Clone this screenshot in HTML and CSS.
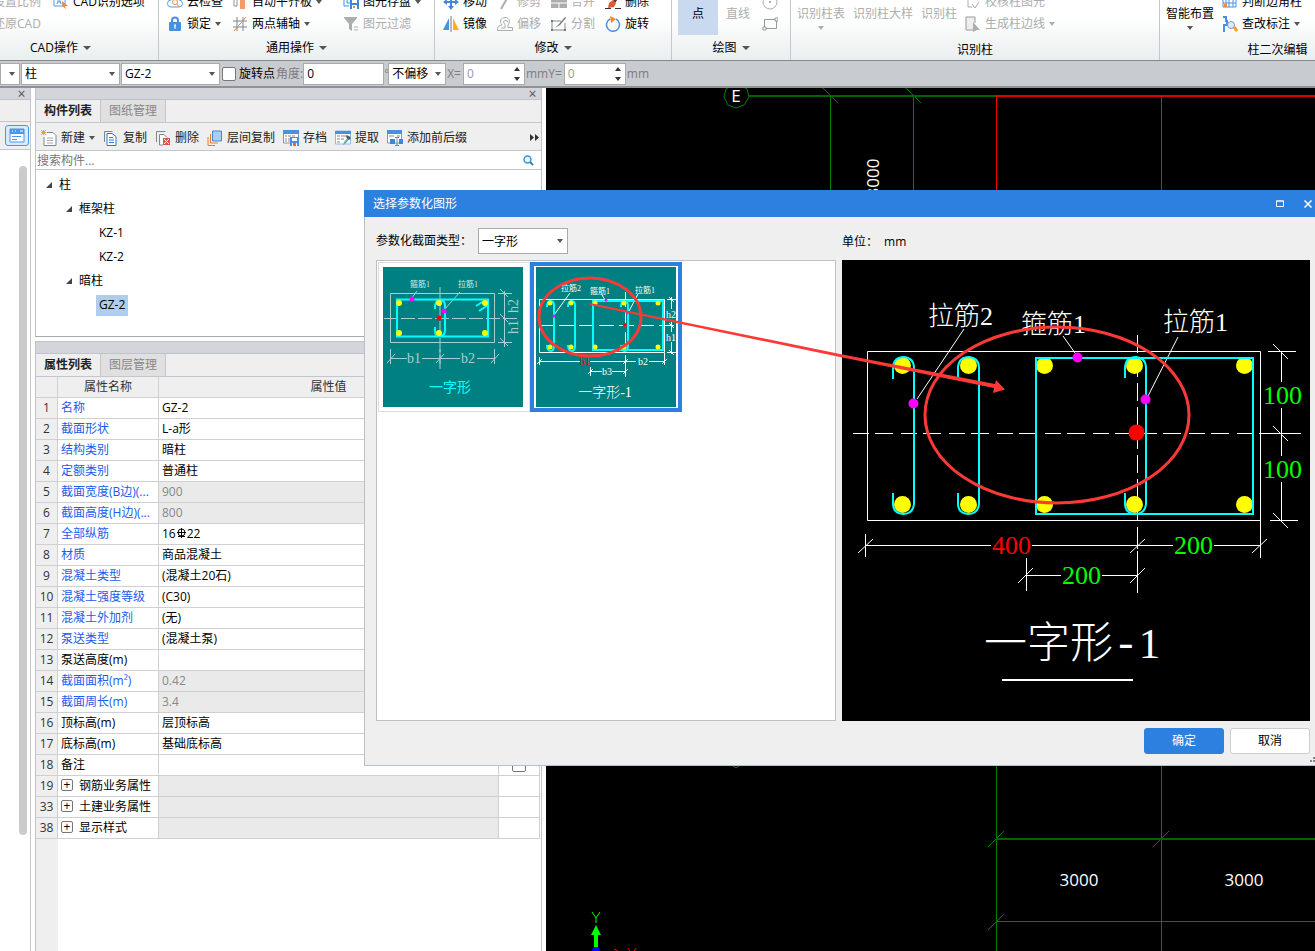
FILE: index.html
```html
<!DOCTYPE html>
<html lang="zh-CN">
<head>
    <meta charset="UTF-8">
    <meta name="viewport" content="width=device-width, initial-scale=1.0">
    <title>选择参数化图形</title>
    <link rel="stylesheet" href="styles.css">
</head>
<body>

<header class="ribbon">
    <section class="group group-cad">
        <div class="rows cols-cad">
            <button class="tool off">设置比例</button>
            <button class="tool"><svg class="icon" viewBox="0 0 16 16"><path d="M1 2v10h11V2M4 10l2-6 2 6M5 8h3" fill="none" stroke="#5b9be0"/><path d="M9 7l6 5-3 0 1 3-4-3z" fill="#f08a4b"/></svg>CAD识别选项</button>
            <button class="tool off">还原CAD</button>
        </div>
        <h2 class="group-title">CAD操作<i class="arrow big"></i></h2>
    </section>
    <section class="group group-common">
        <div class="rows cols-common">
            <button class="tool"><svg class="icon" viewBox="0 0 16 16"><path d="M4 13a3.500 3.500 0 0 1 0-7 4.500 4.500 0 0 1 8 0 3.500 3.500 0 0 1 0 7z" fill="#fff" stroke="#5b9be0"/><circle cx="8" cy="8" r="2.500" fill="none" stroke="#f08a4b"/><path d="M10 10l2 3" stroke="#f08a4b"/></svg>云检查</button>
            <button class="tool"><svg class="icon" viewBox="0 0 16 16"><path d="M2 4h3v8H2z" fill="#fff" stroke="#8b96a3"/><path d="M8 2h5v13H8z" fill="#f59a6c"/></svg>自动平齐板<i class="arrow"></i></button>
            <button class="tool"><svg class="icon" viewBox="0 0 16 16"><path d="M1 1v11h5M4 1v8h3" fill="none" stroke="#4a90d9"/><path d="M7 5h9v10H7z" fill="#3f86d6"/><path d="M9 6h5v3H9z" fill="#fff"/><path d="M9 11h5v4H9z" fill="#fff"/><path d="M10 12h2v2h-2z" fill="#f08a4b"/></svg>图元存盘<i class="arrow"></i></button>
            <button class="tool"><svg class="icon" viewBox="0 0 16 16"><path d="M5 7V4.500a3 3 0 0 1 6 0V7" fill="none" stroke="#4a90e2" stroke-width="2"/><rect x="2" y="6" width="12" height="9" rx="1" fill="#4a90e2"/><path d="M8 8v5M7 10h2" stroke="#fff"/></svg>锁定<i class="arrow"></i></button>
            <button class="tool"><svg class="icon" viewBox="0 0 16 16"><path d="M1 5h14M1 11h14M5 1v14M11 1v14" stroke="#7c8794" fill="none"/><path d="M2 15L14 1" stroke="#f08a4b"/></svg>两点辅轴<i class="arrow"></i></button>
            <button class="tool off"><svg class="icon" viewBox="0 0 16 16"><path d="M1 1h13v1L9 8v7l-3-2V8L1 2z" fill="#adadad"/><path d="M11 11h4M11 14h4" stroke="#adadad"/></svg>图元过滤</button>
        </div>
        <h2 class="group-title">通用操作<i class="arrow big"></i></h2>
    </section>
    <section class="group group-edit">
        <div class="rows cols-edit">
            <button class="tool"><svg class="icon" viewBox="0 0 16 16"><path d="M8 0l3 4H9v3h3V5l4 3-4 3V9H9v3h2l-3 4-3-4h2V9H4v2L0 8l4-3v2h3V4H5z" fill="#4a86d2"/></svg>移动</button>
            <button class="tool off"><svg class="icon" viewBox="0 0 16 16"><path d="M12 1L4 15" stroke="#adadad" stroke-width="2"/></svg>修剪</button>
            <button class="tool off"><svg class="icon" viewBox="0 0 16 16"><path d="M0 5h16v9H0z" fill="#adadad"/><path d="M0 9h16M8 9v5" stroke="#fff"/></svg>合并</button>
            <button class="tool"><svg class="icon" viewBox="0 0 16 16"><path d="M14 1L9 8" stroke="#444" stroke-width="3"/><path d="M4 9l4-3 3 3-2 4-6 1z" fill="#e05a2b"/><path d="M0 14.500h6M10 14.500h6" stroke="#333"/></svg>删除</button>
            <button class="tool"><svg class="icon" viewBox="0 0 16 16"><path d="M6 2v12H0z" fill="#4a90e2"/><path d="M10 2v12h6z" fill="#fbb117"/><path d="M8 0v16" stroke="#777"/></svg>镜像</button>
            <button class="tool off"><svg class="icon" viewBox="0 0 16 16"><path d="M.5 14.500h15v-3H11V9c3-4 1-7.500-3-7.500S2 5 5 9l-2 .5c-2 .5-2.500 2-2.500 5zM4 12h4V8.500Q5 5 8 4.500t3 2" fill="none" stroke="#adadad"/></svg>偏移</button>
            <button class="tool off"><svg class="icon" viewBox="0 0 16 16"><path d="M1 5h9M1 5v9h13V7" fill="none" stroke="#888"/><path d="M4 12l4-4 6-7 1 1-6 7z" fill="#777"/><path d="M0 4h2v2H0zM0 13h2v2H0zM13 13h2v2h-2z" fill="#777"/></svg>分割</button>
            <button class="tool"><svg class="icon" viewBox="0 0 16 16"><path d="M11 3a6.500 6.500 0 1 1-6 0" fill="none" stroke="#4a90e2" stroke-width="1.500"/><path d="M5 0l6 3-5 4z" fill="#f08a24"/></svg>旋转</button>
        </div>
        <h2 class="group-title">修改<i class="arrow big"></i></h2>
    </section>
    <section class="group group-draw">
        <div class="big-row">
            <button class="big-tool on">点</button>
            <button class="big-tool off">直线</button>
            <div class="stack">
                <button class="tool off" aria-label="圆"><svg class="icon" viewBox="0 0 16 16"><circle cx="8" cy="8" r="7" fill="none" stroke="#adadad"/><path d="M7 7h2v2H7z" fill="#adadad"/></svg></button>
                <button class="tool off" aria-label="矩形"><svg class="icon" viewBox="0 0 16 16"><path d="M2.500 3.500h12v9h-12z" fill="none" stroke="#999"/><path d="M13 2h3v3h-3zM1 11h3v3H1z" fill="#fff" stroke="#999"/></svg></button>
            </div>
        </div>
        <h2 class="group-title">绘图<i class="arrow big"></i></h2>
    </section>
    <section class="group group-recognize">
        <div class="big-row">
            <button class="big-tool off">识别柱表<i class="arrow"></i></button>
            <button class="big-tool off">识别柱大样</button>
            <button class="big-tool off">识别柱</button>
            <div class="stack">
                <button class="tool off"><svg class="icon" viewBox="0 0 16 16"><path d="M3 1v12h4M3 2h9v4" fill="none" stroke="#adadad"/><path d="M7 10l3 4 4-6" fill="none" stroke="#adadad"/></svg>校核柱图元</button>
                <button class="tool off"><svg class="icon" viewBox="0 0 16 16"><path d="M9 14H1V1h9v6" fill="#eee" stroke="#999"/><path d="M8 6l7 8-3 0-4 2z" fill="#adadad"/></svg>生成柱边线<i class="arrow"></i></button>
            </div>
        </div>
        <h2 class="group-title low">识别柱</h2>
    </section>
    <section class="group group-second">
        <div class="big-row">
            <button class="big-tool">智能布置<i class="arrow"></i></button>
            <div class="stack">
                <button class="tool"><svg class="icon" viewBox="0 0 16 16"><path d="M1 3v10h13V3M4 3v10M7 3v10M11 3v10M1 9h13" fill="none" stroke="#4a90e2"/><path d="M2 10h3v3H2z" fill="#f08a4b"/></svg>判断边角柱</button>
                <button class="tool"><svg class="icon" viewBox="0 0 16 16"><path d="M1 1h3v4h2M1 15h1V9h3V5" fill="none" stroke="#4a90e2" stroke-width="2"/><circle cx="9" cy="9" r="3.500" fill="#dfeaff" stroke="#7a94d8"/><path d="M12 11l3 4" stroke="#f5a31a" stroke-width="3"/></svg>查改标注<i class="arrow"></i></button>
            </div>
        </div>
        <h2 class="group-title low">柱二次编辑</h2>
    </section>
</header>

<form class="options">
    <select class="w-level" aria-label="楼层"><option></option></select>
    <select class="w-wide" aria-label="构件类型"><option>柱</option></select>
    <select class="w-wide" aria-label="构件"><option>GZ-2</option></select>
    <input type="checkbox" class="check" id="rotate"><label for="rotate" class="dark">旋转点</label>
    <label for="angle">角度:</label><input type="text" class="w-angle" id="angle" value="0"><span class="degree">°</span>
    <select class="w-offset" aria-label="偏移"><option>不偏移</option></select>
    <label for="offx">X=</label><input type="text" class="spin" id="offx" value="0"><span>mm</span>
    <label for="offy">Y=</label><input type="text" class="spin" id="offy" value="0"><span>mm</span>
</form>

<main class="workspace">
    <aside class="nav">
        <div class="dock-head"><button class="close" aria-label="关闭">×</button></div>
        <div class="nav-blank"></div>
        <div class="nav-tools">
            <button class="nav-view" aria-label="视图"><svg width="16" height="16" viewBox="0 0 16 16"><path d="M1 1h14v13H1z" fill="#fff" stroke="#4a98ea"/><path d="M1 1h14v5H1z" fill="#4a98ea"/><path d="M3 3h1M6 3h1M11 3h3" stroke="#fff"/><path d="M3 8.500h9M3 11.500h5" stroke="#4a98ea"/></svg></button>
        </div>
        <div class="nav-list"><div class="scrollbar"></div></div>
    </aside>

    <div class="docks">
        <section class="dock dock-members">
            <div class="dock-head"><button class="close" aria-label="关闭">×</button></div>
            <div class="tabs"><button class="tab active">构件列表</button><button class="tab">图纸管理</button></div>
            <div class="toolbar">
                <button class="tool"><svg class="icon" viewBox="0 0 16 16"><path d="M6 2.500h6l3 3v10H3V7" fill="#fff" stroke="#7c8794"/><path d="M6 8h6M6 10.500h6M6 13h6" stroke="#aaa"/><path d="M0 0l5 5M5 0L0 5M2.500 0v5M0 2.500h5" stroke="#f0a030"/></svg>新建<i class="arrow"></i></button>
                <button class="tool"><svg class="icon" viewBox="0 0 16 16"><path d="M1.500 12V1.500h8" fill="none" stroke="#7c8794"/><path d="M4 3.500h5l4 3v9H4z" fill="#fff" stroke="#2f78d0"/><path d="M6 7.500h4M6 10h5M6 12.500h5" stroke="#2f78d0"/></svg>复制</button>
                <button class="tool"><svg class="icon" viewBox="0 0 16 16"><path d="M1.500 12V1.500h9" fill="none" stroke="#7c8794"/><path d="M8 15H4.500V4.500H9l3 3" fill="#fff" stroke="#7c8794"/><path d="M8 8h7v7H8z" fill="#d9534f"/><path d="M9 9l5 5M14 9l-5 5" stroke="#fff"/></svg>删除</button>
                <button class="tool"><svg class="icon" viewBox="0 0 16 16"><path d="M5.500 1h9v10h-9z" fill="#a9cdf7" stroke="#4a86d2"/><path d="M3.500 4v9H11M1 7v8.500h7" fill="none" stroke="#ee7a2b"/></svg>层间复制</button>
                <button class="tool"><svg class="icon" viewBox="0 0 16 16"><path d="M.5 1h15v12H.5z" fill="#fff" stroke="#8b96a3"/><path d="M0 0h16v4H0z" fill="#4a90e2"/><path d="M2 6h2m1 0h3m1 0h3M2 9h2m1 0h2M2 11h2m1 0h2" stroke="#888"/><path d="M7 7h9v9H7z" fill="#4a90e2"/><path d="M9 8h5v3H9zM9 13h5v3H9z" fill="#fff"/><path d="M10 13h3v3h-3z" fill="#f06a20"/></svg>存档</button>
                <button class="tool"><svg class="icon" viewBox="0 0 16 16"><path d="M.5 1h15v13H.5z" fill="#fff" stroke="#8fb9ea"/><path d="M0 1h16v3H0z" fill="#4a90e2"/><path d="M2 6h3m1 0h6M2 9h3m1 0h3M2 12h3" stroke="#888"/><path d="M8 15l1-3 5-6 2 1-5 6z" fill="#5ab0c0"/><path d="M12 5l4 3-2 2-3-3z" fill="#555"/></svg>提取</button>
                <button class="tool"><svg class="icon" viewBox="0 0 16 16"><path d="M.5 1h14v12H.5z" fill="#fff" stroke="#8b96a3"/><path d="M0 0h15v4H0z" fill="#4a90e2"/><path d="M2 6h5m3 0h3" stroke="#888"/><path d="M3 9h5v5H3zM12 9h4v5h-4z" fill="#3f86d6"/><path d="M8 7.500h4M10 7v8M8 15.500h4" stroke="#4a90e2"/></svg>添加前后缀</button>
                <button class="more" aria-label="更多"><svg width="9" height="7" viewBox="0 0 9 7"><path d="M0 0l4 3.500L0 7zM5 0l4 3.500L5 7z" fill="#333"/></svg></button>
            </div>
            <div class="search">
                <input type="text" aria-label="搜索构件" placeholder="搜索构件...">
                <svg width="11" height="11" viewBox="0 0 11 11"><circle cx="4.500" cy="4.500" r="3.500" fill="#eaf5ff" stroke="#3a9bd0" stroke-width="1.500"/><path d="M7 7l3 3" stroke="#2e86bd" stroke-width="2"/></svg>
            </div>
            <ul class="tree">
                <li><span class="node"><i class="twist"></i>柱</span>
                    <ul>
                        <li><span class="node"><i class="twist"></i>框架柱</span>
                            <ul>
                                <li><span class="node leaf">KZ-1</span></li>
                                <li><span class="node leaf">KZ-2</span></li>
                            </ul>
                        </li>
                        <li><span class="node"><i class="twist"></i>暗柱</span>
                            <ul>
                                <li><span class="node leaf"><b class="picked">GZ-2</b></span></li>
                            </ul>
                        </li>
                    </ul>
                </li>
            </ul>
        </section>

        <section class="dock dock-props">
            <div class="dock-head"></div>
            <div class="tabs"><button class="tab active">属性列表</button><button class="tab">图层管理</button></div>
            <div class="props-body">
            <table class="props">
                <colgroup><col class="c-num"><col class="c-name"><col class="c-value"><col class="c-extra"></colgroup>
                <thead><tr><th></th><th>属性名称</th><th>属性值</th><th></th></tr></thead>
                <tbody>
                <tr><th>1</th><td class="key">名称</td><td>GZ-2</td><td></td></tr>
                <tr><th>2</th><td class="key">截面形状</td><td>L-a形</td><td></td></tr>
                <tr><th>3</th><td class="key">结构类别</td><td>暗柱</td><td></td></tr>
                <tr><th>4</th><td class="key">定额类别</td><td>普通柱</td><td></td></tr>
                <tr><th>5</th><td class="key">截面宽度(B边)(...</td><td class="locked">900</td><td></td></tr>
                <tr><th>6</th><td class="key">截面高度(H边)(...</td><td class="locked">800</td><td></td></tr>
                <tr><th>7</th><td class="key">全部纵筋</td><td>16<svg class="rebar" width="11" height="10" viewBox="0 0 11 10"><circle cx="5.500" cy="4.500" r="3.500" fill="none" stroke="#000"/><path d="M5.500 0v10M1 4.500h9M2 8.500h7" stroke="#000"/></svg>22</td><td></td></tr>
                <tr><th>8</th><td class="key">材质</td><td>商品混凝土</td><td></td></tr>
                <tr><th>9</th><td class="key">混凝土类型</td><td>(混凝土20石)</td><td></td></tr>
                <tr><th>10</th><td class="key">混凝土强度等级</td><td>(C30)</td><td></td></tr>
                <tr><th>11</th><td class="key">混凝土外加剂</td><td>(无)</td><td></td></tr>
                <tr><th>12</th><td class="key">泵送类型</td><td>(混凝土泵)</td><td></td></tr>
                <tr><th>13</th><td>泵送高度(m)</td><td></td><td></td></tr>
                <tr><th>14</th><td class="key">截面面积(m²)</td><td class="locked">0.42</td><td></td></tr>
                <tr><th>15</th><td class="key">截面周长(m)</td><td class="locked">3.4</td><td></td></tr>
                <tr><th>16</th><td>顶标高(m)</td><td>层顶标高</td><td></td></tr>
                <tr><th>17</th><td>底标高(m)</td><td>基础底标高</td><td></td></tr>
                <tr><th>18</th><td>备注</td><td></td><td class="center"><input type="checkbox" class="check" aria-label="备注附加"></td></tr>
                <tr><th>19</th><td><button class="plus" aria-label="展开">+</button>钢筋业务属性</td><td class="locked"></td><td></td></tr>
                <tr><th>33</th><td><button class="plus" aria-label="展开">+</button>土建业务属性</td><td class="locked"></td><td></td></tr>
                <tr><th>38</th><td><button class="plus" aria-label="展开">+</button>显示样式</td><td class="locked"></td><td></td></tr>
                </tbody>
            </table>
            </div>
        </section>
    </div>

    <div class="canvas">
        <svg viewBox="546 88 769 863" preserveAspectRatio="xMinYMin slice">
            <!-- 轴网 -->
            <g fill="none" stroke="#008000">
                <path d="M733 85l-7 4-2 8 4 8 8 3 8-3 5-8-2-8-7-4zM728 762l8 6 8-6"/>
                <path d="M830.500 96v100M913.500 96v100M823 88l15 15M906 88l15 15"/>
                <path d="M996.500 760v191M1161.500 760v191M996 921.500h319"/>
                <path d="M988 847l16-16M1153 847l16-16M988 930l16-16"/>
            </g>
            <path d="M749 96h247M996 839h319" fill="none" stroke="#006400" stroke-width="2"/>
            <path d="M996 96h319" fill="none" stroke="#e00000" stroke-width="2"/>
            <path d="M996.500 96v100M1161.500 96v100" fill="none" stroke="#ff0000"/>
            <g class="axis-text" text-anchor="middle">
                <text x="736" y="102">E</text>
                <text x="1079" y="886">3000</text>
                <text x="1244" y="886">3000</text>
                <text transform="translate(879 178) rotate(-90)">3000</text>
            </g>
            <!-- 坐标轴 -->
            <path d="M592 912l4 6 4-6M596 918v5" fill="none" stroke="#0f0"/>
            <path d="M596 925l5 10h-3v14h-4v-14h-3z" fill="#0f0"/>
            <path d="M592 951a4 4 0 0 1 8 0z" fill="#00f"/>
            <path d="M614 949l4 2M628 948l3 5M636 948l-3 5" stroke="#f00"/>
        </svg>
    </div>
</main>

<div class="dialog" role="dialog" aria-labelledby="dialog-title">
    <div class="dialog-head">
        <h1 id="dialog-title">选择参数化图形</h1>
        <button class="win" aria-label="最大化"><svg width="8" height="7" viewBox="0 0 8 7"><path d="M.5 1h7v5.500h-7zM0 1h8" fill="none" stroke="#fff"/></svg></button>
        <button class="win" aria-label="关闭"><svg width="8" height="8" viewBox="0 0 8 8"><path d="M.5.5l7 7M7.500.5l-7 7" stroke="#fff" stroke-width="1.500"/></svg></button>
    </div>
    <div class="dialog-body">
        <div class="pick">
            <div class="field"><label for="section-type">参数化截面类型：</label><select id="section-type"><option>一字形</option></select></div>
            <div class="gallery">
                <button class="thumb">
                    <svg viewBox="0 0 140 140">
                        <g fill="none" stroke="#a5d0d0">
                            <path d="M7.500 26.500h104v49H7.500z"/>
                            <path d="M57 20v83M1 51.500h135" stroke-dasharray="14 3"/>
                            <path d="M7.500 82v15M57 82v15M111.500 82v15M7 91.500h17M39 91.500h38M94 91.500h18M4 96l8-9M53 96l8-9M108 96l8-9"/>
                            <path d="M121.500 24v56M115 26.500h14M115 75.500h14M117 22l8 8M117 47l8 8M117 71l8 8M34 24l-6 8M77 25L61 43"/>
                        </g>
                        <g fill="none" stroke="#0ff" stroke-width="2">
                            <path d="M14 32.500h91v37H14zM52 42v-3q1-6 5-6 5 0 5 6v24q0 6-5 6-5 0-5-5v-4"/>
                            <path d="M93 39l8-5M96 44l9-6"/>
                        </g>
                        <g fill="#ff0"><circle cx="16" cy="36" r="3"/><circle cx="56" cy="36" r="3"/><circle cx="102" cy="36" r="3"/><circle cx="16" cy="66" r="3"/><circle cx="56" cy="66" r="3"/><circle cx="102" cy="66" r="3"/></g>
                        <g fill="#f0f"><circle cx="29" cy="32" r="2.500"/><circle cx="61" cy="44" r="2.500"/></g>
                        <circle cx="56" cy="51" r="2.500" fill="#f00"/>
                        <g class="cad-text" fill="#d5eaea" text-anchor="middle">
                            <text class="label" x="37" y="20" font-size="8">箍筋1</text><text class="label" x="85" y="20" font-size="8">拉筋1</text>
                            <g fill="#a5d0d0" font-size="14"><text x="31" y="96">b1</text><text x="85" y="96">b2</text>
                            <text transform="translate(135 39) rotate(-90)">h2</text><text transform="translate(135 60) rotate(-90)">h1</text></g>
                            <text class="label" x="67" y="125" font-size="14" fill="#0ff">一字形</text>
                        </g>
                    </svg>
                </button>
                <button class="thumb selected">
                    <svg viewBox="0 0 140 140">
                        <g fill="none" stroke="#fff">
                            <path d="M3.500 32.500h125v53H3.500z"/>
                            <path d="M89.500 25v60M3 58.500h137" stroke-dasharray="15 5"/>
                            <path d="M3.500 90v8M89.500 88v22M128.500 86v12M3 94.500h41M54 94.500h46M113 94.500h16M54.500 100v9M54 104.500h12M76 104.500h13M1 97l5-5M87 97l5-5M126 97l5-5M52 107l5-5M87 107l5-5"/>
                            <path d="M135.500 30v12M135.500 53v12M135.500 75v12M131 32.500h9M131 85.500h9M133 30l5 5M133 56l5 5M133 83l5 5M34 26L18 48M66 28l3 5M102 27L92 46"/>
                        </g>
                        <g fill="none" stroke="#0ff" stroke-width="2">
                            <path d="M11 40q0-6 4-6 3 0 3 5v39q0 6-3 6-4 0-4-6M32 40q0-6 4-6 3 0 3 5v39q0 6-3 6-4 0-4-6M85 40q0-6 4-6 3 0 3 5v39q0 6-3 6-4 0-4-6M57 34h70v49H57z"/>
                        </g>
                        <g fill="#ff0"><circle cx="14" cy="36" r="2.500"/><circle cx="35" cy="36" r="2.500"/><circle cx="59" cy="36" r="2.500"/><circle cx="88" cy="36" r="2.500"/><circle cx="122" cy="36" r="2.500"/><circle cx="14" cy="80" r="2.500"/><circle cx="35" cy="80" r="2.500"/><circle cx="59" cy="80" r="2.500"/><circle cx="88" cy="80" r="2.500"/><circle cx="122" cy="80" r="2.500"/></g>
                        <g fill="#f0f"><circle cx="18" cy="49" r="1.500"/><circle cx="70" cy="33" r="1.500"/><circle cx="91" cy="46" r="1.500"/></g>
                        <circle cx="89" cy="58" r="2" fill="#f00"/>
                        <g class="cad-text" fill="#fff" text-anchor="middle">
                            <g class="label" font-size="8"><text x="35" y="24">拉筋2</text><text x="64" y="27">箍筋1</text><text x="109" y="26">拉筋1</text></g>
                            <g font-size="10"><text x="49" y="98" fill="#f00">b1</text><text x="107" y="98">b2</text><text x="71" y="108">b3</text><text x="135" y="51">h2</text><text x="135" y="74">h1</text></g>
                            <text x="69" y="130" font-size="14">一字形-1</text>
                        </g>
                    </svg>
                </button>
            </div>
        </div>
        <div class="preview">
            <p class="unit"><span>单位：</span>mm</p>
            <svg viewBox="842 260 468 461">
                <g fill="none" stroke="#fff">
                    <path d="M867.500 351.500h393v169h-393z"/>
                    <path d="M853 433.500h400" stroke-dasharray="16 6 18 8"/>
                    <path d="M1259 433.500h42"/>
                    <path d="M1137.500 335v180" stroke-dasharray="18 6"/>
                    <path d="M1137.500 515v6M1137.500 527v22M1137.500 551v42M1260.500 520v38M865.500 534v23M1026.500 558v33"/>
                    <path d="M865 545.500h126M1032 545.500h141M1214 545.500h47M1026 575.500h35M1102 575.500h36"/>
                    <path d="M858 553l15-14M1130 553l15-14M1252 553l15-14M1018 583l15-15M1130 583l15-15"/>
                    <path d="M1268 351.500h28M1281.500 352v30M1281.500 408v48M1281.500 482v39M1270 520.500h28M1273 344l15 15M1273 426l15 15M1273 513l15 15"/>
                    <path d="M964 329l-47 70M1063 336l12 17M1178 337l-30 59"/>
                    <path d="M1002 680h131" stroke-width="2"/>
                </g>
                <g fill="#ff0">
                    <circle cx="902.500" cy="365.500" r="8.500"/><circle cx="968.500" cy="365.500" r="8.500"/><circle cx="1044.500" cy="365.500" r="8.500"/><circle cx="1134.500" cy="365.500" r="8.500"/><circle cx="1244.500" cy="365.500" r="8.500"/>
                    <circle cx="902.500" cy="504.500" r="8.500"/><circle cx="968.500" cy="504.500" r="8.500"/><circle cx="1044.500" cy="504.500" r="8.500"/><circle cx="1134.500" cy="504.500" r="8.500"/><circle cx="1244.500" cy="504.500" r="8.500"/>
                </g>
                <g fill="none" stroke="#0ff" stroke-width="2">
                    <path d="M1036 358h217v156h-217z"/>
                    <path d="M893 379v-12q1-10 11-10 10 1 10 11v136q-1 10-11 10-10-1-10-10v-11"/>
                    <path d="M958 379v-12q1-10 11-10 10 1 10 11v136q-1 10-11 10-10-1-10-10v-11"/>
                    <path d="M1125 378v-11q1-10 11-10 10 1 10 11v136q-1 10-11 10-10-1-10-10v-11"/>
                </g>
                <g fill="#f0f"><circle cx="913.500" cy="403.500" r="5"/><circle cx="1077.500" cy="357.500" r="5"/><circle cx="1145.500" cy="399.500" r="5"/></g>
                <circle cx="1136.500" cy="432.500" r="8" fill="#f00"/>
                <g class="cad-text" fill="#fff" font-size="26">
                    <text x="928" y="325">拉筋2</text>
                    <text x="1021" y="333">箍筋1</text>
                    <text x="1163" y="331">拉筋1</text>
                    <g fill="#0f0"><text x="1263" y="404">100</text><text x="1263" y="478">100</text><text x="1174" y="554">200</text><text x="1062" y="584">200</text></g>
                    <text x="992" y="554" fill="#f00">400</text>
                    <text x="984" y="658" font-size="43">一字形<tspan class="dash">-</tspan>1</text>
                </g>
            </svg>
        </div>
    </div>
    <div class="dialog-foot">
        <button class="btn primary">确定</button>
        <button class="btn">取消</button>
    </div>
    <svg class="grip" width="5" height="6" viewBox="0 0 5 6"><path d="M3 0h2v2H3zM0 3h2v2H0zM3 3h2v2H3z" fill="#888"/></svg>
    <!-- 红色批注 -->
    <svg class="marks" width="951" height="576" viewBox="364 190 951 576">
        <g fill="none" stroke="#fb3a38" stroke-width="3">
            <ellipse cx="590" cy="317" rx="51" ry="39"/>
            <ellipse cx="1057" cy="415" rx="132" ry="88"/>
        </g>
        <path d="M590 303L840 354l155 30 1-4 9 9.500-12 3.500 1-5-154-31-250-52z" fill="#fb3a38"/>
    </svg>
</div>

</body>
</html>
```
FILE: styles.css
```css
* {
    box-sizing: border-box;
}
body {
    margin: 0;
    height: 100vh;
    display: flex;
    flex-direction: column;
    position: relative;
    overflow: hidden;
    background: #fff;
    color: #000;
    font-family: "Open Sans", "Noto Sans CJK SC", sans-serif;
    font-size: 12px;
    line-height: 16px;
}
button, input, select {
    font: inherit;
    color: inherit;
    margin: 0;
    border-radius: 0;
}
button {
    padding: 0;
    border: none;
    background: none;
    white-space: nowrap;
    cursor: pointer;
}
h1, h2, p, ul {
    margin: 0;
    padding: 0;
    font-size: 12px;
    font-weight: normal;
}
ul {
    list-style: none;
}
select, .spin {
    appearance: none;
    background: #fff url("data:image/svg+xml,%3Csvg xmlns='http://www.w3.org/2000/svg' width='6' height='4'%3E%3Cpath d='M0 0h6L3 4z' fill='%23555'/%3E%3C/svg%3E") no-repeat right 4px center;
}

/* 功能区 */
.ribbon {
    flex: none;
    display: flex;
    height: 61px;
    overflow: hidden;
    border-bottom: 1px solid #85898e;
    background: linear-gradient(#fff 30%, #e9eeee);
}
.group {
    flex: none;
    display: flex;
    flex-direction: column;
    justify-content: flex-end;
    position: relative;
    border-right: 1px solid #c3c8cc;
}
.group-cad { width: 196px; margin-left: -37px; }
.group-common { width: 276px; }
.group-edit { width: 237px; }
.group-draw { width: 119px; }
.group-recognize { width: 369px; }
.group-second { width: 236px; }
.group-title {
    height: 25px;
    line-height: 25px;
    text-align: center;
}
.group-title.low {
    padding-top: 2px;
}
.rows {
    display: grid;
    grid-auto-rows: 22px;
}
.cols-cad {
    grid-template-columns: 60px auto;
    padding-left: 30px;
}
.cols-common {
    grid-template-columns: 65px 111px auto;
    padding-left: 8px;
}
.cols-edit {
    grid-template-columns: repeat(4, 54px);
    padding-left: 8px;
}
.tool {
    display: flex;
    align-items: center;
    height: 22px;
}
.icon {
    flex: none;
    width: 16px;
    height: 16px;
    margin-right: 4px;
}
.off {
    color: #adadad;
}
.arrow {
    display: inline-block;
    margin-left: 4px;
    border: 3px solid transparent;
    border-top: 4px solid #555;
    border-bottom: none;
}
.arrow.big {
    margin-left: 5px;
    border-width: 4px 4px 0;
    vertical-align: 2px;
}
.off .arrow {
    border-top-color: #adadad;
}
.big-row {
    display: flex;
    height: 44px;
    padding-left: 6px;
    gap: 8px;
}
.big-tool {
    display: flex;
    flex-direction: column;
    align-items: center;
    padding-top: 15px;
}
.big-tool .arrow {
    margin: 4px 0 0;
}
.big-tool.on {
    width: 40px;
    background: #c9d9f0;
}
.group-draw .stack {
    margin-left: 4px;
}

/* 选项栏 */
.options {
    flex: none;
    display: flex;
    align-items: center;
    height: 27px;
    border-bottom: 2px solid #8e9196;
    background: #c8cbd0;
    color: #7d7d7d;
}
.options select, .options input[type="text"] {
    height: 22px;
    padding: 0 3px;
    border: 1px solid #aaa;
    background-color: #fff;
}
.options select {
    margin-right: 1px;
    color: #000;
}
.options .w-level { width: 20px; }
.options .w-wide { width: 99px; }
.options .w-angle { width: 81px; color: #000; }
.options .w-offset { width: 58px; }
.options .spin {
    width: 62px;
    margin: 0 1px 0 2px;
    color: #999;
    background-image: url("data:image/svg+xml,%3Csvg xmlns='http://www.w3.org/2000/svg' width='6' height='14'%3E%3Cpath d='M0 4h6L3 0zM0 10h6l-3 4z' fill='%23333'/%3E%3C/svg%3E");
}
.options .dark {
    color: #000;
    margin-right: 1px;
}
.degree {
    width: 4px;
}
.check {
    appearance: none;
    width: 14px;
    height: 14px;
    border: 1px solid #777;
    border-radius: 2px;
    background: #fff;
}
.options .check {
    margin: 0 3px 0 1px;
}

/* 左侧停靠栏 */
.workspace {
    flex: 1;
    display: flex;
    min-height: 0;
}
.nav {
    flex: none;
    display: flex;
    flex-direction: column;
    width: 31px;
    border-right: 1px solid #c4c6ce;
}
.dock-head {
    flex: none;
    display: flex;
    justify-content: flex-end;
    align-items: center;
    height: 12px;
    padding-right: 4px;
    border-bottom: 1px solid #c0c3ca;
    background: #d3d5da;
}
.close {
    width: 9px;
    font-size: 14px;
    line-height: 10px;
    color: #555;
}
.nav-blank {
    height: 22px;
    border-bottom: 1px solid #c4c6ce;
    background: #efefef;
}
.nav-tools {
    display: flex;
    justify-content: flex-end;
    padding: 3px 1px;
    border-bottom: 1px solid #c4c6ce;
    background: #efefef;
}
.nav-view {
    display: flex;
    justify-content: center;
    align-items: center;
    width: 24px;
    height: 21px;
    border: 1px solid #4a98ea;
    border-radius: 3px;
    background: #d8eafc;
}
.nav-list {
    flex: 1;
    padding: 16px 3px 116px 19px;
}
.scrollbar {
    height: 100%;
    border-radius: 4px;
    background: #cbcbcb;
}
.docks {
    flex: none;
    display: flex;
    flex-direction: column;
    gap: 4px;
    width: 507px;
    margin: 0 4px;
}
.dock {
    display: flex;
    flex-direction: column;
    border: 1px solid #c0c3ca;
    border-width: 0 1px;
}
.dock-members {
    height: 249px;
    border-bottom: 1px solid #aaa;
}
.dock-props {
    flex: 1;
    border-top-width: 1px;
}
.tabs {
    flex: none;
    display: flex;
    height: 23px;
    border-bottom: 1px solid #c4c6ce;
    background: #efefef;
}
.tab {
    width: 65px;
    border-right: 1px solid #c4c6ce;
    background: #e0e0e0;
    color: #888;
}
.tab.active {
    background: #efefef;
    color: #222;
    font-weight: bold;
}
.toolbar {
    flex: none;
    display: flex;
    align-items: center;
    gap: 8px;
    height: 28px;
    padding: 2px 2px 0 5px;
    border-bottom: 1px solid #c4c6ce;
    background: #efefef;
    color: #222;
}
.more {
    display: flex;
    margin-left: auto;
}
.search {
    flex: none;
    display: flex;
    align-items: center;
    height: 19px;
    padding-right: 7px;
    border-bottom: 1px solid #c4c6ce;
}
.search input {
    flex: 1;
    height: 18px;
    padding: 0 1px;
    border: none;
}
.search input::placeholder {
    color: #777;
}
.tree {
    padding: 3px 0 0 8px;
}
.tree ul {
    padding-left: 20px;
}
.node {
    display: flex;
    align-items: center;
    height: 24px;
}
.twist {
    margin: 0 7px 0 2px;
    border: 3px solid #444;
    border-top-color: transparent;
    border-left-color: transparent;
}
.leaf {
    padding-left: 15px;
}
.picked {
    margin-left: -3px;
    padding: 2px 3px 3px;
    font-weight: normal;
    background: #b1cdee;
}

/* 属性表 */
.props-body {
    flex: 1;
    background: linear-gradient(90deg, #efefef 22px, #fff 22px);
}
.props {
    width: 504px;
    table-layout: fixed;
    border-spacing: 0;
}
.c-num { width: 22px; }
.c-name { width: 101px; }
.c-value { width: 340px; }
.c-extra { width: 41px; }
.props th, .props td {
    height: 21px;
    padding: 0 3px;
    border: 1px solid #d0d0d0;
    border-width: 0 1px 1px 0;
    background: #fff;
    line-height: 16px;
    text-align: left;
    white-space: nowrap;
}
.props th {
    padding: 0;
    background: #efefef;
    color: #333;
    font-weight: normal;
    text-align: center;
}
.props .key {
    color: #1a5cf0;
}
.props .locked {
    background: #eaeaea;
    color: #888;
}
.props .center {
    text-align: center;
}
.props .check {
    display: block;
    margin: 0 auto;
}
.rebar {
    vertical-align: 0;
}
.plus {
    width: 12px;
    height: 12px;
    margin-right: 6px;
    border: 1px solid #777;
    border-radius: 2px;
    line-height: 10px;
    vertical-align: 1px;
}

/* 绘图区 */
.canvas {
    flex: 1;
    min-width: 0;
    overflow: hidden;
    background: #000;
}
.canvas svg {
    display: block;
    width: 100%;
    height: 100%;
}
.axis-text {
    font-size: 17px;
    fill: #fff;
}

/* 参数化图形对话框 */
.dialog {
    position: absolute;
    left: 364px;
    top: 190px;
    right: 0;
    border: 1px solid #b4c0cc;
    border-width: 0 0 1px 1px;
    background: #efefef;
}
.dialog-head {
    display: flex;
    align-items: center;
    gap: 20px;
    height: 27px;
    margin-left: -1px;
    padding: 0 3px 0 9px;
    background: #2c80e0;
    color: #fff;
}
.dialog-head h1 {
    flex: 1;
}
.win {
    display: flex;
}
.dialog-body {
    display: flex;
    gap: 6px;
    padding: 11px 5px 0 11px;
}
.pick {
    flex: none;
    display: flex;
    flex-direction: column;
    gap: 6px;
    width: 460px;
}
.field {
    display: flex;
    align-items: center;
}
.field label {
    width: 102px;
}
.field select {
    width: 90px;
    height: 26px;
    padding: 1px 3px 0;
    border: 1px solid #aaa;
}
.gallery {
    flex: 1;
    display: flex;
    align-items: flex-start;
    padding: 1px;
    border: 1px solid #c0c0c0;
    background: #fff;
}
.thumb {
    width: 152px;
    height: 150px;
    padding: 4px;
    border: 1px solid #ddd;
}
.thumb.selected {
    padding: 1px 2px;
    border: 4px solid #2c80e0;
}
.thumb svg {
    display: block;
    width: 140px;
    height: 140px;
    background: #008080;
}
.preview {
    flex: 1;
    min-width: 0;
}
.preview svg {
    display: block;
    width: 100%;
    background: #000;
}
.unit {
    height: 26px;
    margin-bottom: 6px;
    line-height: 28px;
}
.unit span {
    margin-right: 6px;
}
.cad-text {
    font-family: "Liberation Serif", "Noto Sans CJK SC", serif;
    font-weight: 300;
}
.cad-text .label {
    font-weight: 400;
}
.dash {
    font-family: "Liberation Mono", monospace;
}
.dialog-foot {
    display: flex;
    justify-content: flex-end;
    gap: 6px;
    padding: 7px 5px 11px;
}
.btn {
    width: 80px;
    height: 26px;
    border: 1px solid #ccc;
    border-radius: 3px;
    background: #fff;
}
.btn.primary {
    border-color: #2c80e0;
    background: #2c80e0;
    color: #fff;
}
.grip {
    position: absolute;
    right: 0;
    bottom: 2px;
}
.marks {
    position: absolute;
    left: -1px;
    top: 0;
    pointer-events: none;
}
```
